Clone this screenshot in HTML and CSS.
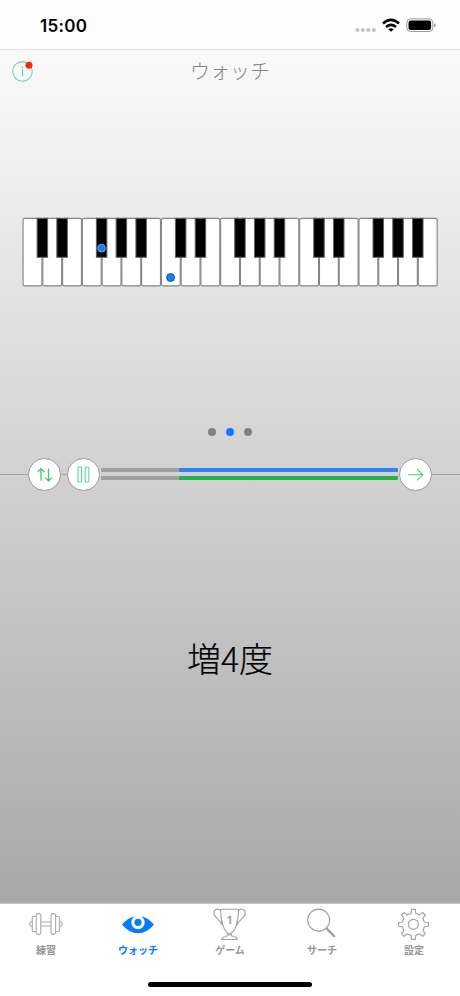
FILE: index.html
```html
<!DOCTYPE html>
<html lang="ja">
<head>
<meta charset="utf-8">
<title>ウォッチ</title>
<link rel="stylesheet" href="styles.css">
</head>
<body>
<div class="app">
  <header class="status">
    <span class="time">15:00</span>
    <svg class="status-icons" width="82" height="18" viewBox="354 16 82 18">
      <g fill="#c4c4c4"><circle cx="357.4" cy="30" r="2.1"/><circle cx="362.8" cy="30" r="2.1"/><circle cx="368.3" cy="30" r="2.1"/><circle cx="373.8" cy="30" r="2.1"/></g>
      <g fill="none" stroke="#000" stroke-width="2.5"><path d="M383 23.5Q391 16.3 399 23.5"/><path d="M386 27Q391 22.8 396 27"/></g>
      <path d="M388.3 29.2Q391 27.2 393.7 29.2L391 31.8Z"/>
      <rect x="406.8" y="18.9" width="26" height="12.6" rx="3.8" fill="none" stroke="#999"/>
      <rect x="408.5" y="20.5" width="22.6" height="9.4" rx="2.2"/>
      <path d="M434.2 23.2Q437 25.2 434.2 27.2Z" fill="#888"/>
    </svg>
  </header>
  <nav class="title-bar">
    <svg class="info" width="24" height="24" viewBox="11 59 24 24">
      <circle cx="22.5" cy="71.4" r="9.8" fill="none" stroke="#69d5a4" stroke-width="1.1"/>
      <path d="M22.5 69.3V76.2" fill="none" stroke="#69d5a4" stroke-width="1.2"/>
      <circle cx="22.5" cy="66.9" r=".8" fill="#69d5a4"/>
      <circle cx="29" cy="65.3" r="3.5" fill="#ff260b"/>
    </svg>
    <h1>ウォッチ</h1>
  </nav>
  <main>
    <section class="keyboard">
      <svg width="416" height="70" viewBox="0 0 416 70">
        <defs>
          <rect id="w" x=".65" y=".9" width="18.9" height="67.6" rx="1.7"/>
          <g id="octave-white"><use href="#w"/><use href="#w" x="19.76"/><use href="#w" x="39.52"/><use href="#w" x="59.28"/><use href="#w" x="79.04"/><use href="#w" x="98.8"/><use href="#w" x="118.56"/></g>
          <rect id="b" x="14.7" y=".9" width="10.5" height="39"/>
          <g id="octave-black"><use href="#b"/><use href="#b" x="19.76"/><use href="#b" x="59.28"/><use href="#b" x="79.04"/><use href="#b" x="98.8"/></g>
        </defs>
        <g transform="translate(.4 .4)">
          <g fill="#fff" stroke="#858585" stroke-width="1.15"><use href="#octave-white"/><use href="#octave-white" x="138.32"/><use href="#octave-white" x="276.64"/></g>
          <g fill="#000" stroke="#655f63" stroke-width="1"><use href="#octave-black"/><use href="#octave-black" x="138.32"/><use href="#octave-black" x="276.64"/></g>
        </g>
        <circle cx="79.5" cy="31.2" r="3.9" fill="#147ff0" stroke="#79b8f5" stroke-width=".8"/>
        <circle cx="148.6" cy="60.5" r="4" fill="#147ff0" stroke="#17508f" stroke-width=".9"/>
      </svg>
    </section>
    <div class="dots"><i></i><i class="on"></i><i></i></div>
    <div class="controls">
      <span class="rule lead"></span>
      <button class="round"><svg width="32" height="32" viewBox="0 0 32 32"><path d="M12 21.8V9.8M8.8 13L12 9.6L15.2 13M19.5 9.6V21.8M16.3 18.6L19.5 22L22.7 18.6" stroke="#43c968" stroke-width="1.3"/></svg></button>
      <span class="rule link"></span>
      <button class="round"><svg width="32" height="32" viewBox="0 0 32 32"><path d="M10 8H13.5V23H10ZM17.2 8H20.8V23H17.2Z" stroke="#4bdc91"/></svg></button>
      <div class="meters"><span class="meter blue"></span><span class="meter green"></span></div>
      <button class="round"><svg width="32" height="32" viewBox="0 0 32 32"><path d="M8 15.8H22.6M17.1 10.2L22.8 15.8L17.1 21.4" stroke="#51ce65" stroke-width="1.1"/></svg></button>
      <span class="rule tail"></span>
    </div>
    <section class="answer">増4度</section>
  </main>
  <footer>
    <div class="tabs">
      <div class="tab">
        <svg width="36" height="36" viewBox="-18 -17 36 36"><g fill="none" stroke="#aaa" stroke-width="1.1"><rect x="-9.8" y="-10.4" width="4.6" height="20.8" rx="1.6"/><rect x="5" y="-10.4" width="4.6" height="20.8" rx="1.6"/><path d="M-9.8-7.5H-12.5Q-13.7-7.5-13.7-6.2V6.2Q-13.7 7.5-12.5 7.5H-9.8M9.6-7.5H12.3Q13.5-7.5 13.5-6.2V6.2Q13.5 7.5 12.3 7.5H9.6M-13.7-2.5Q-16.3-2.5-16.3 0Q-16.3 2.5-13.7 2.5M13.5-2.5Q16.1-2.5 16.1 0Q16.1 2.5 13.5 2.5M-5.2-2H5M-5.2 2H5"/></g></svg>
        <span>練習</span>
      </div>
      <div class="tab active">
        <svg width="36" height="36" viewBox="-18 -17 36 36"><path d="M-16 .5Q-9.5-6.7-3-7.7Q-6.7-5.5-6.7-1.5A6.7 6.7 0 0 0 6.7-1.5Q6.7-5.5 3-7.7Q9.5-6.7 16 .5Q9 9.3 0 9.3Q-9 9.3-16 .5Z" fill="#087aff"/><circle cy="-1.7" r="3.6" fill="#087aff"/></svg>
        <span>ウォッチ</span>
      </div>
      <div class="tab">
        <svg width="36" height="36" viewBox="-17.6 -17 36 36"><g fill="none" stroke="#a3a3a3" stroke-width="1.15" stroke-linejoin="round"><path d="M-9-14.8H8.9C8.8-3 7 6.4 0 10.2C-7 6.4-8.8-3-9-14.8Z"/><path d="M-9-13.2C-12-16.5-17-14.3-15.3-9.2C-14-5.5-9-4-7.3 1M8.9-13.2C12-16.5 17-14.3 15.3-9.2C14-5.5 9-4 7.3 1M-7.5-3.2L-7.8 1M7.5-3.2L7.8 1M-2 10.1H2L1.5 11.7Q7.4 12.7 7.8 15.5H-7.8Q-7.4 12.7-1.5 11.7Z"/></g><text x="-.2" y="0" class="medal">1</text></svg>
        <span>ゲーム</span>
      </div>
      <div class="tab">
        <svg width="36" height="36" viewBox="-18 -17 36 36"><g fill="none" stroke="#a0a0a0"><circle cx="-3.3" cy="-3.9" r="11" stroke-width="1.1"/><path d="M4.6 4.4L12.2 12.2" stroke-width="2.3" stroke-linecap="round"/></g></svg>
        <span>サーチ</span>
      </div>
      <div class="tab">
        <svg width="36" height="36" viewBox="-17.4 -17.4 36 36"><g fill="none" stroke="#a3a3a3" stroke-width="1.15" stroke-linejoin="round"><path d="M-4.4-10.2L-2.4-11L-1.9-15H1.9L2.4-11L4.4-10.2L6.2-9.5L9.2-11.9L11.9-9.2L9.5-6.2L10.2-4.4L11-2.4L15-1.9V1.9L11 2.4L10.2 4.4L9.5 6.2L11.9 9.2L9.2 11.9L6.2 9.5L4.4 10.2L2.4 11L1.9 15H-1.9L-2.4 11L-4.4 10.2L-6.2 9.5L-9.2 11.9L-11.9 9.2L-9.5 6.2L-10.2 4.4L-11 2.4L-15 1.9V-1.9L-11-2.4L-10.2-4.4L-9.5-6.2L-11.9-9.2L-9.2-11.9L-6.2-9.5Z"/><circle r="5"/></g></svg>
        <span>設定</span>
      </div>
    </div>
    <div class="home"></div>
  </footer>
</div>
</body>
</html>
```
FILE: styles.css
```css
* { box-sizing: border-box; }
body { margin: 0; font-family: "Inter", "Noto Sans CJK JP", sans-serif; }
.app {
  width: 460px;
  height: 996px;
  display: flex;
  flex-direction: column;
  overflow: hidden;
  background: linear-gradient(#fff 0, #a8a8a8 903px);
}
.status {
  height: 50px;
  display: flex;
  justify-content: space-between;
  padding: 16px 24px 0 40px;
  background: linear-gradient(#fff, #fcfcfc);
  border-bottom: 1px solid #dedede;
}
.time { font-size: 17px; line-height: 20px; font-weight: 600; letter-spacing: .3px; }
.title-bar {
  height: 44px;
  display: grid;
  grid-template-columns: 24px 1fr 24px;
  padding: 9px 11px 0;
}
.title-bar h1 {
  margin: -1px 0 0;
  text-align: center;
  font: 300 20px/25px "Noto Sans CJK JP", sans-serif;
  color: #858585;
}
main { flex: 1; display: flex; flex-direction: column; }
.keyboard { height: 333.5px; padding: 123px 22px 0; }
svg { display: block; }
.dots { display: flex; justify-content: center; gap: 10px; height: 29.5px; }
.dots i { width: 8px; height: 8px; border-radius: 50%; background: #808080; }
.dots .on { background: #087aff; }
.controls { height: 34px; display: flex; align-items: center; }
.rule { height: 1px; background: #a5a5a5; }
.lead { width: 28px; }
.link { width: 6px; }
.tail { flex: 1; }
.round {
  width: 33px;
  height: 33px;
  padding: 0;
  border: 1px solid #999;
  border-radius: 50%;
  background: #fff;
  display: grid;
  place-items: center;
  flex: none;
  fill: none;
}
.meters { width: 299px; padding: 0 1.5px 0 1px; display: grid; gap: 4px; }
.meter { height: 4px; border-radius: 1px; }
.blue { background: linear-gradient(90deg, #a0a0a0 78px, #2f82f6 78px); }
.green { background: linear-gradient(90deg, #a0a0a0 78px, #27ae51 78px); }
.answer {
  padding-top: 142px;
  text-align: center;
  font: 300 34px/50px "Noto Sans CJK JP", sans-serif;
  color: #000;
  -webkit-text-stroke: .2px #000;
}
footer { height: 93px; background: #fff; border-top: 1px solid #c8c8c8; }
.tabs { display: grid; grid-template-columns: repeat(5, 1fr); height: 79px; }
.tab {
  display: flex;
  flex-direction: column;
  align-items: center;
  padding-top: 3px;
  color: #969696;
  font: 700 10px/15px "Noto Sans CJK JP", sans-serif;
}
.tab span { margin-top: -1px; }
.active { color: #087aff; }
.medal { font: 700 11px "Inter", sans-serif; fill: #a0a0a0; text-anchor: middle; }
.home { width: 164px; height: 5px; margin: -1px auto 0; border-radius: 3px; background: #000; }
```
